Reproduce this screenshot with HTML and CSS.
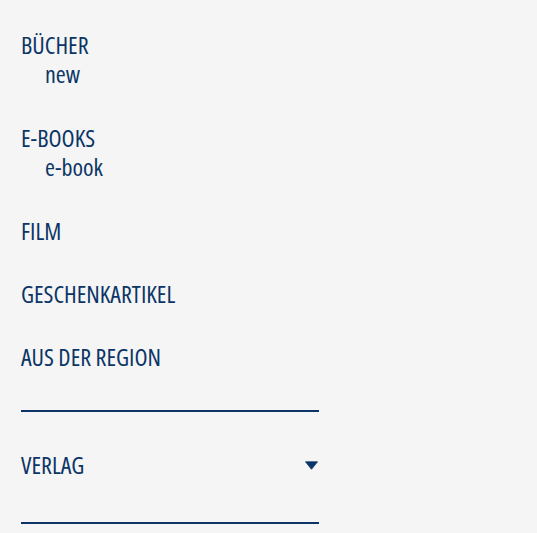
FILE: index.html
```
<!DOCTYPE html>
<html lang="de"><head><meta charset="utf-8"><link rel="stylesheet" href="styles.css"></head>
<body>
<nav class="nav">
  <ul class="menu">
    <li class="item">
      <a class="link" href="#">BÜCHER</a>
      <ul class="sub"><li><a class="sublink" href="#">new</a></li></ul>
    </li>
    <li class="item">
      <a class="link" href="#">E-BOOKS</a>
      <ul class="sub"><li><a class="sublink" href="#">e-book</a></li></ul>
    </li>
    <li class="item"><a class="link" href="#">FILM</a></li>
    <li class="item"><a class="link" href="#">GESCHENKARTIKEL</a></li>
    <li class="item"><a class="link" href="#">AUS DER REGION</a></li>
  </ul>
  <div class="filter">
    <span class="filter-label">VERLAG</span>
    <svg class="caret" width="13" height="9" viewBox="0 0 13 9"><path d="M0.5 0.8 L12.5 0.8 L6.5 8.3 Z" fill="currentColor" stroke="currentColor" stroke-width="0.8" stroke-linejoin="round"/></svg>
  </div>
</nav>
</body></html>
```
FILE: styles.css
```
html,body{margin:0;padding:0}
body{background:#f5f5f5;color:#0b3566;font-family:"Open Sans",sans-serif;font-stretch:75%;font-weight:500;font-size:24px;line-height:29px}
.nav{width:298px;padding:30px 0 0 21px}
.menu,.sub{list-style:none;margin:0;padding:0}
.menu{display:flex;flex-direction:column;gap:34px}
.link,.sublink{color:inherit;text-decoration:none;display:block}
.sub{padding-left:24px;margin-bottom:1px}
.filter{margin-top:39px;border-top:2px solid #0b3566;border-bottom:2px solid #0b3566;padding:38px 0 43px;display:flex;align-items:center;justify-content:space-between}
.caret{display:block;margin-right:1px;margin-top:1px}
```
